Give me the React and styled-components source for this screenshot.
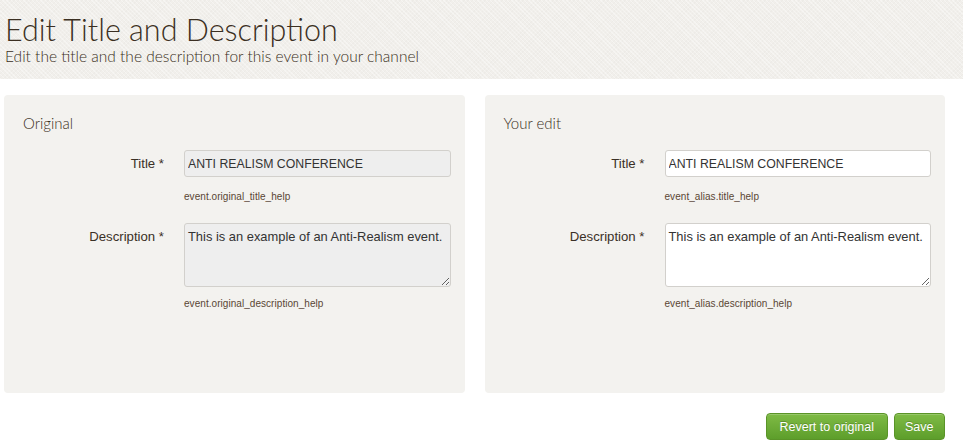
import React from "react";
import styled, { createGlobalStyle } from "styled-components";

const Global = createGlobalStyle`
  html, body { margin: 0; padding: 0; background: #fff; }
  body { font-family: "Liberation Sans", Arial, sans-serif; color: #333; }
  * { box-sizing: border-box; }
`;

const Header = styled.header`
  height: 79px;
  padding: 12px 0 0 5px;
  background-color: #f1efeb;
  background-image:
    repeating-linear-gradient(45deg, rgba(255,255,255,0.35) 0 1px, transparent 1px 3px),
    repeating-linear-gradient(-45deg, rgba(0,0,0,0.015) 0 1px, transparent 1px 3px);
`;

const PageTitle = styled.h1`
  margin: 0;
  font-family: "Lato", "Open Sans", sans-serif;
  font-weight: 300;
  font-size: 30.5px;
  line-height: 35px;
  color: #3b2f22;
`;

const SubTitle = styled.p`
  margin: 0;
  font-family: "Lato", "Open Sans", sans-serif;
  font-weight: 300;
  font-size: 15.5px;
  line-height: 18px;
  color: #3b2f22;
`;

const Columns = styled.div`
  display: grid;
  grid-template-columns: 1fr 1fr;
  gap: 20px;
  padding: 16px 18px 0 4px;
`;

const Panel = styled.section`
  background: #f3f2ef;
  border-radius: 4px;
  height: 298px;
  padding: 19px 14px 0 19px;
`;

const PanelTitle = styled.h2`
  margin: 0 0 18px 0;
  font-family: "Lato", "Open Sans", sans-serif;
  font-weight: 300;
  font-size: 15px;
  line-height: 18px;
  color: #3b2f22;
`;

const Row = styled.div`
  display: grid;
  grid-template-columns: 141px 1fr;
  column-gap: 20px;
  margin-bottom: 20px;
`;

const Label = styled.label`
  text-align: right;
  font-size: 13.2px;
  line-height: 27px;
  color: #3a3026;
`;

const Field = styled.div`
  display: flex;
  flex-direction: column;
`;

const fieldBase = `
  width: 100%;
  font-family: "Liberation Sans", Arial, sans-serif;
  color: #333;
  border: 1px solid #d2d0cc;
  border-radius: 3px;
  padding: 4px 3px;
  outline: none;
`;

const TextInput = styled.input`
  ${fieldBase}
  font-size: 12.3px;
  height: 27px;
  background: ${(p) => (p.disabled ? "#eeeeee" : "#fff")};
`;

const TextArea = styled.textarea`
  ${fieldBase}
  font-size: 12.9px;
  display: block;
  height: 64px;
  resize: vertical;
  line-height: 15px;
  padding-top: 5px;
  background: ${(p) => (p.disabled ? "#eeeeee" : "#fff")};
`;

const Help = styled.span`
  margin-top: ${(p) => p.$mt}px;
  font-size: 10px;
  line-height: 12px;
  color: #5a4634;
  letter-spacing: 0.05px;
`;

const Actions = styled.div`
  display: flex;
  justify-content: flex-end;
  gap: 6px;
  padding: 20px 18px 0 0;
`;

const Button = styled.button`
  height: 27px;
  padding: 0 ${(p) => p.$px}px;
  font-family: "Liberation Sans", Arial, sans-serif;
  font-size: 12.5px;
  color: #fff;
  text-shadow: 0 -1px 0 rgba(0,0,0,0.2);
  border: 1px solid #5a9428;
  border-radius: 4px;
  background: linear-gradient(#7fbb45, #5d9e2b);
  box-shadow: inset 0 1px 0 rgba(255,255,255,0.2);
  cursor: pointer;
`;

function FormPanel({ title, disabled, titleHelp, descHelp }) {
  return (
    <Panel>
      <PanelTitle>{title}</PanelTitle>
      <Row>
        <Label>Title *</Label>
        <Field>
          <TextInput disabled={disabled} defaultValue="ANTI REALISM CONFERENCE" />
          <Help $mt={14}>{titleHelp}</Help>
        </Field>
      </Row>
      <Row>
        <Label>Description *</Label>
        <Field>
          <TextArea disabled={disabled} defaultValue="This is an example of an Anti-Realism event." />
          <Help $mt={11}>{descHelp}</Help>
        </Field>
      </Row>
    </Panel>
  );
}

export default function App() {
  return (
    <>
      <Global />
      <Header>
        <PageTitle>Edit Title and Description</PageTitle>
        <SubTitle>Edit the title and the description for this event in your channel</SubTitle>
      </Header>
      <Columns>
        <FormPanel
          title="Original"
          disabled
          titleHelp="event.original_title_help"
          descHelp="event.original_description_help"
        />
        <FormPanel
          title="Your edit"
          titleHelp="event_alias.title_help"
          descHelp="event_alias.description_help"
        />
      </Columns>
      <Actions>
        <Button $px={12.5}>Revert to original</Button>
        <Button $px={10.5}>Save</Button>
      </Actions>
    </>
  );
}
